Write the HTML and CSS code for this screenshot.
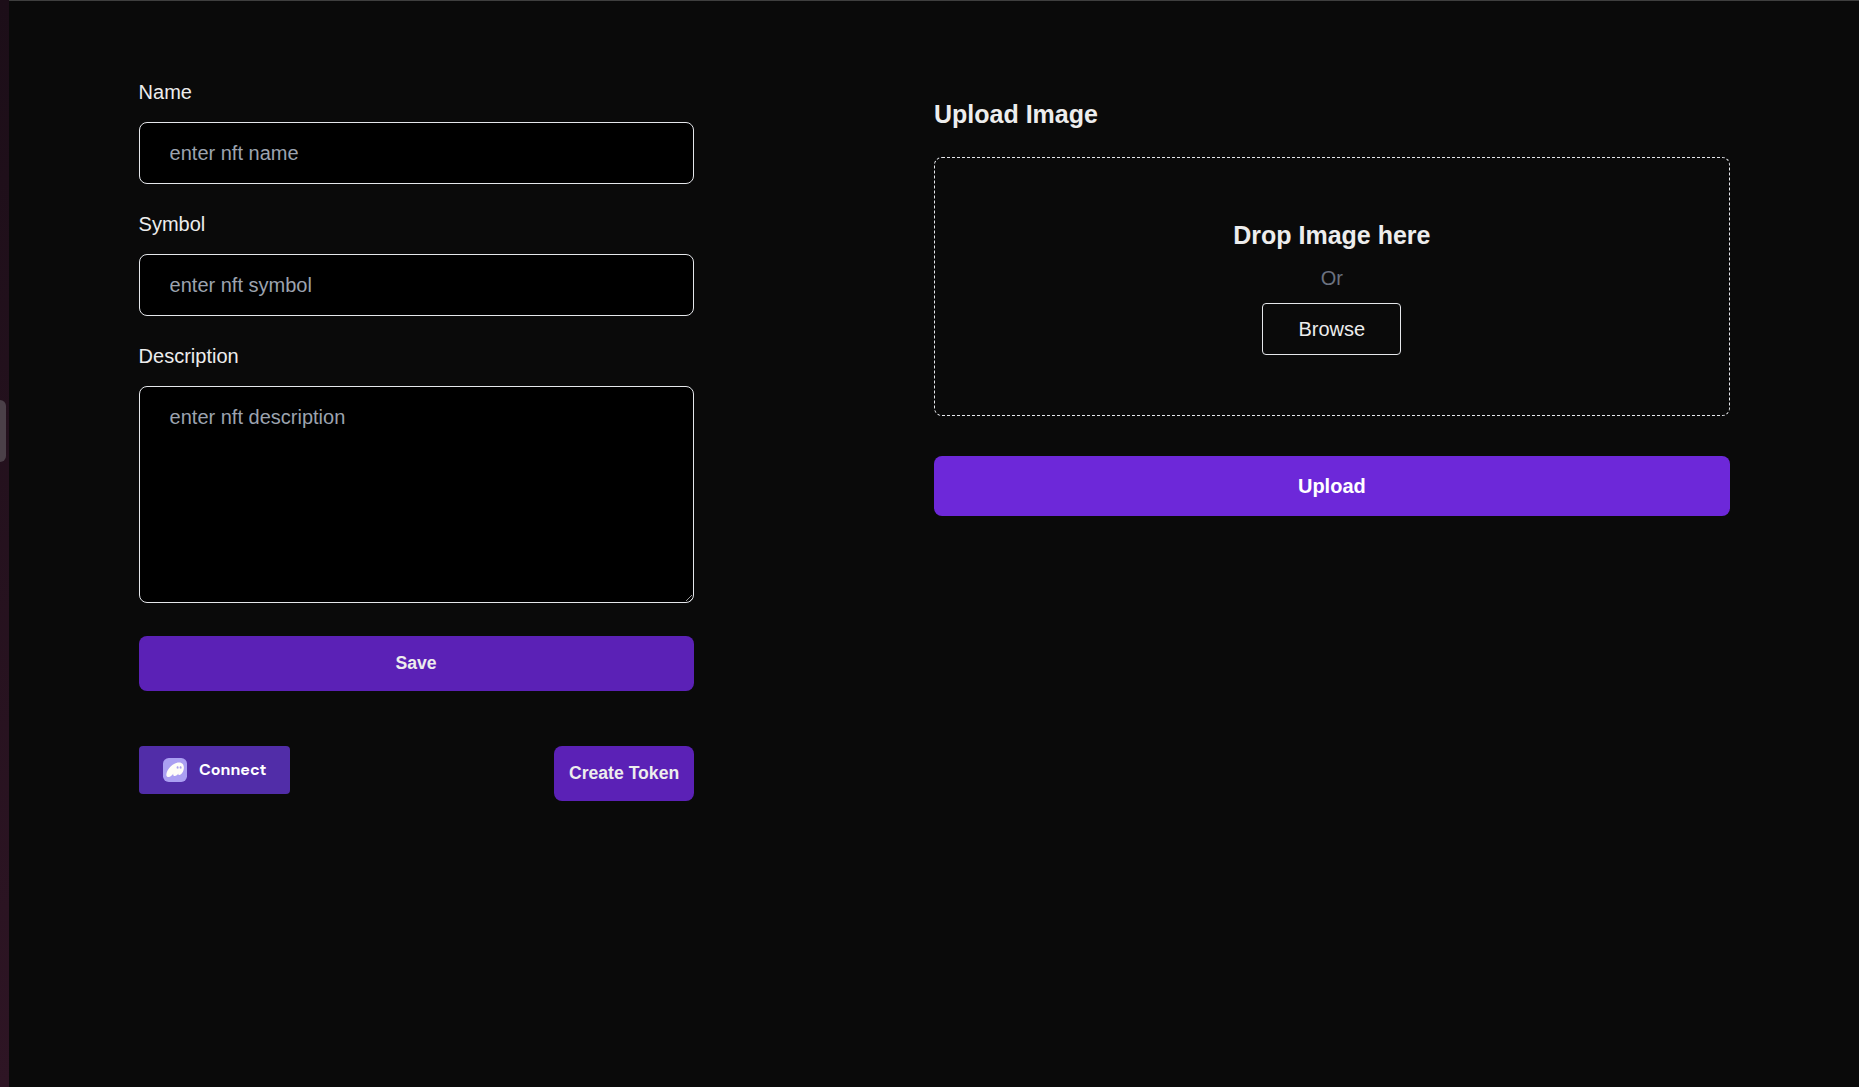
FILE: index.html
```html
<!DOCTYPE html>
<html lang="en">
<head>
<meta charset="utf-8">
<title>Create NFT</title>
<link rel="stylesheet" href="styles.css">
</head>
<body>
<div class="screen">
  <aside class="edge"><span class="handle"></span></aside>
  <main class="page">
    <form class="details">
      <label class="label" for="name">Name</label>
      <input class="field" id="name" type="text" placeholder="enter nft name">
      <label class="label" for="symbol">Symbol</label>
      <input class="field" id="symbol" type="text" placeholder="enter nft symbol">
      <label class="label" for="description">Description</label>
      <textarea class="field area" id="description" placeholder="enter nft description"></textarea>
      <button class="button save" type="button">Save</button>
      <div class="actions">
        <button class="connect" type="button">
          <svg class="wallet" viewBox="0 0 108 108" aria-hidden="true">
            <rect width="108" height="108" rx="26" fill="#ab9ff2"/>
            <path fill="#fffdf8" fill-rule="evenodd" d="M46.5267 69.9229C42.0054 76.8509 34.4292 85.6182 24.348 85.6182C19.5824 85.6182 15 83.6563 15 75.1342C15 53.4305 44.6326 19.8327 72.1268 19.8327C87.768 19.8327 94 30.6846 94 43.0079C94 58.8258 83.7355 76.9122 73.5321 76.9122C70.2939 76.9122 68.7053 75.1342 68.7053 72.314C68.7053 71.5783 68.8275 70.7812 69.0719 69.9229C65.5893 75.8699 58.8685 81.3878 52.5754 81.3878C47.993 81.3878 45.6713 78.5063 45.6713 74.4598C45.6713 72.9884 45.9768 71.4556 46.5267 69.9229ZM83.6761 42.5794C83.6761 46.1704 81.5575 47.9658 79.1875 47.9658C76.7816 47.9658 74.6989 46.1704 74.6989 42.5794C74.6989 38.9885 76.7816 37.1931 79.1875 37.1931C81.5575 37.1931 83.6761 38.9885 83.6761 42.5794ZM70.2103 42.5794C70.2103 46.1704 68.0916 47.9658 65.7216 47.9658C63.3157 47.9658 61.233 46.1704 61.233 42.5794C61.233 38.9885 63.3157 37.1931 65.7216 37.1931C68.0916 37.1931 70.2103 38.9885 70.2103 42.5794Z"/>
          </svg>
          <span>Connect</span>
        </button>
        <button class="button create" type="button">Create Token</button>
      </div>
    </form>
    <section class="upload">
      <h2 class="heading">Upload Image</h2>
      <div class="dropzone">
        <h3 class="heading">Drop Image here</h3>
        <p class="or">Or</p>
        <button class="browse" type="button">Browse</button>
      </div>
      <button class="button send" type="button">Upload</button>
    </section>
  </main>
</div>
</body>
</html>
```
FILE: styles.css
```css
* { box-sizing: border-box; margin: 0; }

body {
  background: #0a0a0a;
  color: #ededed;
  font-family: "Liberation Sans", Arial, sans-serif;
  font-size: 20px;
  line-height: 28px;
}

button, input, textarea { font: inherit; color: inherit; }

.screen { display: flex; height: 1087px; overflow: hidden; }

.edge {
  display: flex;
  align-items: center;
  width: 9px;
  padding-bottom: 225px;
  background: linear-gradient(#1c0e18, #2e1524);
}

.handle {
  width: 6px;
  height: 62px;
  border-radius: 0 8px 8px 0;
  background: #4b4048;
}

.page {
  flex: 1;
  display: flex;
  align-items: flex-start;
  gap: 240.4px;
  padding: 77px 129.3px 0 129.6px;
  border-top: 1px solid #3f3f3f;
}

.details { display: flex; flex-direction: column; width: 555px; }

.label { margin-bottom: 16px; }

.field {
  display: block;
  width: 100%;
  height: 62px;
  margin-bottom: 26px;
  padding: 16px 30px;
  border: 1px solid #e5e7eb;
  border-radius: 8px;
  background: #000;
  outline: none;
}

.field::placeholder { color: #9ca3af; opacity: 1; }

.area { height: 217px; margin-bottom: 33px; resize: both; }

.button {
  border: 0;
  border-radius: 8px;
  background: #5b21b6;
  font-weight: 700;
  text-align: center;
}

.save, .create { height: 55px; padding: 0 0 2px; font-size: 17.6px; }

.actions {
  display: flex;
  justify-content: space-between;
  align-items: flex-start;
  margin-top: 55px;
}

.connect {
  display: flex;
  align-items: center;
  gap: 12px;
  width: 151px;
  height: 48px;
  padding: 0 0 0 24.4px;
  border: 0;
  border-radius: 4px;
  background: #512da8;
  color: #fff;
  font: 700 16px/48px "DM Sans", Inter, sans-serif;
}

.wallet { flex: none; width: 24px; height: 24px; }

.create { width: 140px; padding-left: 1px; }

.upload { flex: 1; display: flex; flex-direction: column; padding-top: 18px; }

.heading { font-size: 25px; line-height: 36px; font-weight: 700; }

.dropzone {
  display: flex;
  flex-direction: column;
  align-items: center;
  height: 259px;
  margin: 25px 0 40px;
  padding-top: 59px;
  border: 1px dashed #e5e7eb;
  border-radius: 8px;
}

.or { margin: 11px 0; color: #6b7280; }

.browse {
  width: 139px;
  height: 52px;
  padding: 0;
  border: 1px solid #e5e7eb;
  border-radius: 4px;
  background: transparent;
}

.send { height: 60px; background: #6d28d9; color: #fff; }
```
